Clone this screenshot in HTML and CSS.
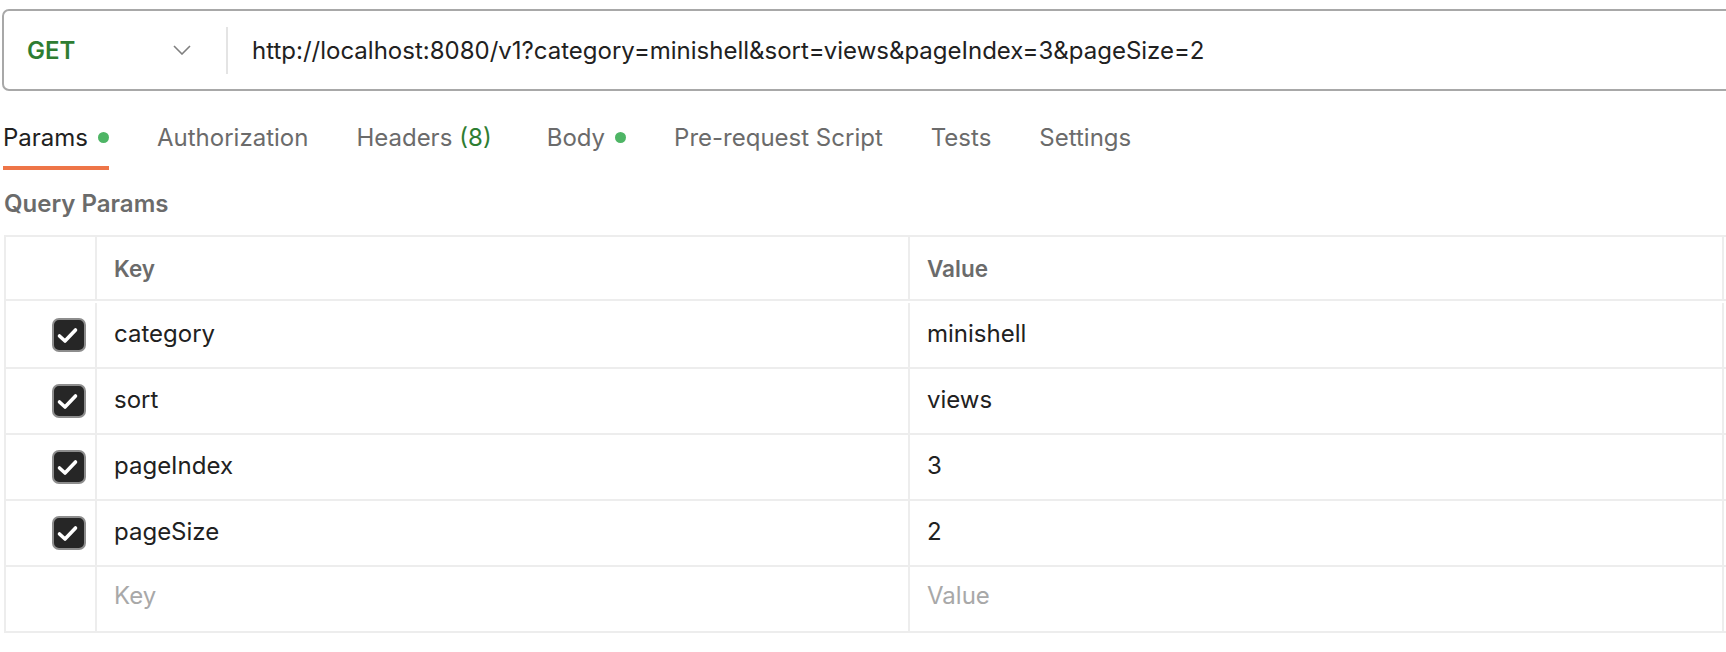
FILE: index.html
```html
<!DOCTYPE html>
<html lang="en">
<head>
<meta charset="utf-8">
<title>Request</title>
<link rel="stylesheet" href="styles.css">
</head>
<body>
<div class="page">
  <div class="urlbar">
    <div class="method">
      <span class="method-name">GET</span>
      <svg class="chevron" width="18" height="10" viewBox="0 0 18 10"><path d="M1 1 L9 9 L17 1" fill="none" stroke="#7f7f7f" stroke-width="1.6"/></svg>
    </div>
    <div class="divider"></div>
    <div class="url">http://localhost:8080/v1?category=minishell&amp;sort=views&amp;pageIndex=3&amp;pageSize=2</div>
  </div>

  <nav class="tabs">
    <div class="tab active">Params<span class="dot"></span></div>
    <div class="tab">Authorization</div>
    <div class="tab tab-headers">Headers <span class="count">(8)</span></div>
    <div class="tab">Body<span class="dot"></span></div>
    <div class="tab">Pre-request Script</div>
    <div class="tab">Tests</div>
    <div class="tab">Settings</div>
  </nav>

  <div class="section-title">Query Params</div>

  <div class="params">
    <div class="cell head"></div>
    <div class="cell head text">Key</div>
    <div class="cell head text">Value</div>
    <div class="cell head"></div>

    <div class="cell check"><span class="checkbox"><svg width="30" height="30" viewBox="0 0 30 30"><path d="M5.5 16 L11 21 L21.5 10" fill="none" stroke="#fff" stroke-width="3.6" stroke-linecap="round" stroke-linejoin="round"/></svg></span></div>
    <div class="cell text">category</div>
    <div class="cell text">minishell</div>
    <div class="cell"></div>

    <div class="cell check"><span class="checkbox"><svg width="30" height="30" viewBox="0 0 30 30"><path d="M5.5 16 L11 21 L21.5 10" fill="none" stroke="#fff" stroke-width="3.6" stroke-linecap="round" stroke-linejoin="round"/></svg></span></div>
    <div class="cell text">sort</div>
    <div class="cell text">views</div>
    <div class="cell"></div>

    <div class="cell check"><span class="checkbox"><svg width="30" height="30" viewBox="0 0 30 30"><path d="M5.5 16 L11 21 L21.5 10" fill="none" stroke="#fff" stroke-width="3.6" stroke-linecap="round" stroke-linejoin="round"/></svg></span></div>
    <div class="cell text">pageIndex</div>
    <div class="cell text">3</div>
    <div class="cell"></div>

    <div class="cell check"><span class="checkbox"><svg width="30" height="30" viewBox="0 0 30 30"><path d="M5.5 16 L11 21 L21.5 10" fill="none" stroke="#fff" stroke-width="3.6" stroke-linecap="round" stroke-linejoin="round"/></svg></span></div>
    <div class="cell text">pageSize</div>
    <div class="cell text">2</div>
    <div class="cell"></div>

    <div class="cell"></div>
    <div class="cell text placeholder">Key</div>
    <div class="cell text placeholder">Value</div>
    <div class="cell"></div>
  </div>
</div>
</body>
</html>
```

FILE: styles.css
```css
* { box-sizing: border-box; }

html, body {
  margin: 0;
  padding: 0;
  background: #ffffff;
  overflow: hidden;
}

body {
  font-family: Inter, "Noto Sans", "Liberation Sans", sans-serif;
  color: #212121;
  width: 1726px;
  height: 652px;
}

.page {
  padding: 9px 0 0 2px;
}

.urlbar {
  display: flex;
  align-items: center;
  width: 1760px;
  height: 82px;
  border: 2px solid #a8a8a8;
  border-radius: 7px;
}

.method {
  width: 222px;
  flex: none;
  display: flex;
  align-items: center;
  justify-content: space-between;
  padding: 0 35px 0 23px;
}

.method-name {
  font-size: 24px;
  font-weight: 600;
  color: #2e7d32;
}

.chevron { display: block; }

.divider {
  width: 2px;
  height: 47px;
  background: #e4e4e4;
  flex: none;
}

.url {
  padding-left: 24px;
  font-size: 24px;
  color: #212121;
  white-space: nowrap;
}

.tabs {
  display: flex;
  gap: 48px;
  margin-top: 32px;
  padding-left: 1px;
}

.tab {
  display: flex;
  align-items: center;
  font-size: 24px;
  line-height: 29px;
  color: #6b6b6b;
  padding-bottom: 14px;
  border-bottom: 4px solid transparent;
  white-space: nowrap;
}

.tab.active {
  color: #212121;
  border-bottom-color: #ee7548;
}

.tab-headers { padding-right: 7px; }

.count { color: #2e7d32; margin-left: 7px; }

.dot {
  width: 11px;
  height: 11px;
  border-radius: 50%;
  background: #4eb565;
  margin-left: 10px;
}

.section-title {
  margin-top: 19px;
  padding-left: 2px;
  font-size: 24px;
  line-height: 29px;
  font-weight: 600;
  color: #6b6b6b;
}

.params {
  margin-top: 17px;
  margin-left: 2px;
  display: grid;
  grid-template-columns: 91px 813px 814px 200px;
  grid-auto-rows: 66px;
  width: 1918px;
  border-top: 2px solid #ededed;
  border-left: 2px solid #ededed;
}

.cell {
  border-right: 2px solid #ededed;
  border-bottom: 2px solid #ededed;
  display: flex;
  align-items: center;
}

.params > .cell:nth-child(-n+4) { height: 64px; }

.text {
  padding-left: 17px;
  padding-bottom: 4px;
  font-size: 24px;
  color: #212121;
}

.head.text {
  padding-bottom: 0;
  font-weight: 600;
  color: #6b6b6b;
  font-size: 22.5px;
}

.placeholder {
  color: #a8a8a8;
  padding-bottom: 8px;
}

.check {
  justify-content: flex-end;
  padding-right: 9px;
}

.checkbox {
  width: 34px;
  height: 34px;
  border-radius: 7px;
  background: #262626;
  border: 2px solid #8d8d8d;
  display: flex;
  align-items: center;
  justify-content: center;
}

.checkbox svg { display: block; }
```
